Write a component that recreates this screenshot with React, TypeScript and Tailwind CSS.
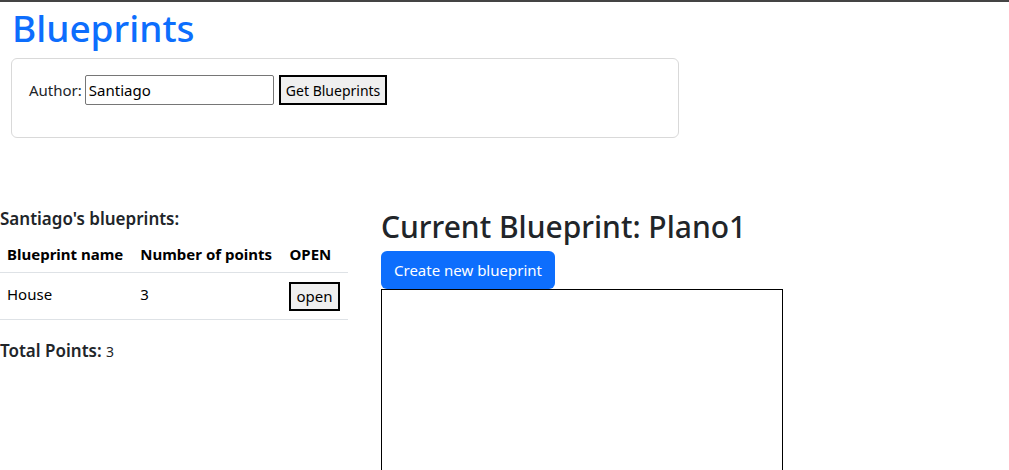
import React from "react";

const font = { fontFamily: '"Segoe UI", "Noto Sans", "Liberation Sans", sans-serif' };

export default function App() {
  const [author, setAuthor] = React.useState("Santiago");
  const blueprints = [{ name: "House", points: 3 }];
  const total = blueprints.reduce((s, b) => s + b.points, 0);

  return (
    <div className="min-h-[470px] w-[1009px] overflow-hidden border-t-2 border-[#444] bg-white text-[#212529]" style={font}>
      <h1 className="ml-[12px] mt-[3px] text-[37px] font-medium leading-[46px] text-[#0d6efd]">Blueprints</h1>

      <div className="ml-[11px] mt-[7px] h-[80px] w-[668px] rounded-[6px] border border-[#d9d9d9] px-[17px] pt-[16px]">
        <div className="flex items-center text-[15px]">
          <label className="mr-[3px]">Author:</label>
          <input
            value={author}
            onChange={(e) => setAuthor(e.target.value)}
            className="h-[30px] w-[189px] rounded-[2px] border border-[#767676] px-[3px] text-[15px] text-black outline-none"
          />
          <button className="ml-[5px] h-[30px] border-2 border-black bg-[#efefef] px-[5px] text-[14px] text-black">
            Get Blueprints
          </button>
        </div>
      </div>

      <div className="mt-[70px] flex items-start gap-[33px]">
        <div className="w-[348px]">
          <h5 className="text-[17px] font-semibold leading-[22px]">Santiago's blueprints:</h5>
          <table className="mt-[6px] w-full border-collapse text-[15px] text-black">
            <thead>
              <tr className="border-b border-[#dee2e6]">
                <th className="px-[7px] pb-[6px] pt-[7px] text-left font-bold">Blueprint name</th>
                <th className="px-[7px] pb-[6px] pt-[7px] text-left font-bold">Number of points</th>
                <th className="px-[7px] pb-[6px] pt-[7px] text-left font-bold">OPEN</th>
              </tr>
            </thead>
            <tbody>
              {blueprints.map((b) => (
                <tr key={b.name} className="border-b border-[#dee2e6]">
                  <td className="px-[7px] pb-[14px] pt-[10px] align-top">{b.name}</td>
                  <td className="px-[7px] pb-[14px] pt-[10px] align-top">{b.points}</td>
                  <td className="px-[7px] pb-[8px] pt-[8px] align-top">
                    <button className="mt-[1px] h-[29px] border-2 border-black bg-[#efefef] px-[5px] text-[15px] leading-none">
                      open
                    </button>
                  </td>
                </tr>
              ))}
            </tbody>
          </table>
          <p className="mt-[18px] text-[17px]">
            <span className="font-semibold">Total Points:</span> <span className="text-[14px]">{total}</span>
          </p>
        </div>

        <div className="flex flex-col items-start">
          <h2 className="text-[30px] font-medium leading-[38px]">Current Blueprint: Plano1</h2>
          <button className="mt-[5px] h-[38px] rounded-[6px] bg-[#0d6efd] px-[13px] text-[15px] text-white">
            Create new blueprint
          </button>
          <div className="h-[200px] w-[402px] border border-black bg-white" />
        </div>
      </div>
    </div>
  );
}
